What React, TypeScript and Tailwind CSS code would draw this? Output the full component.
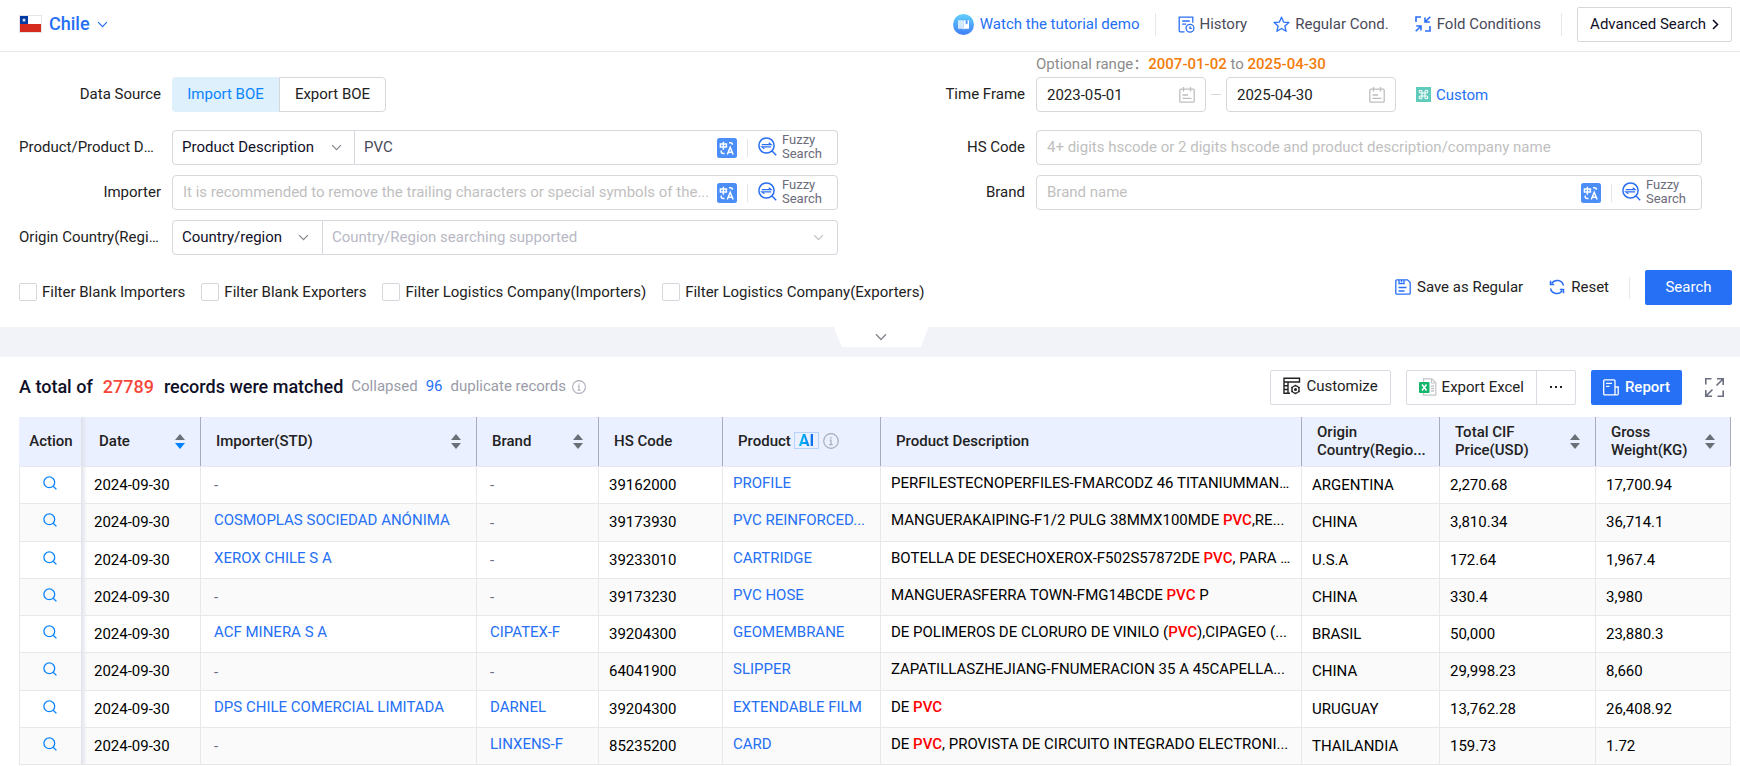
import type { ReactNode } from "react";

interface Row {
  importer?: string;
  brand?: string;
  hsCode: string;
  product: string;
  description: string;
  origin: string;
  price: string;
  weight: string;
}

const DATE = "2024-09-30";

const rows: Row[] = [
  { hsCode: "39162000", product: "PROFILE", description: "PERFILESTECNOPERFILES-FMARCODZ 46 TITANIUMMAN...", origin: "ARGENTINA", price: "2,270.68", weight: "17,700.94" },
  { importer: "COSMOPLAS SOCIEDAD ANÓNIMA", hsCode: "39173930", product: "PVC REINFORCED...", description: "MANGUERAKAIPING-F1/2 PULG 38MMX100MDE PVC,RE...", origin: "CHINA", price: "3,810.34", weight: "36,714.1" },
  { importer: "XEROX CHILE S A", hsCode: "39233010", product: "CARTRIDGE", description: "BOTELLA DE DESECHOXEROX-F502S57872DE PVC, PARA ...", origin: "U.S.A", price: "172.64", weight: "1,967.4" },
  { hsCode: "39173230", product: "PVC HOSE", description: "MANGUERASFERRA TOWN-FMG14BCDE PVC P", origin: "CHINA", price: "330.4", weight: "3,980" },
  { importer: "ACF MINERA S A", brand: "CIPATEX-F", hsCode: "39204300", product: "GEOMEMBRANE", description: "DE POLIMEROS DE CLORURO DE VINILO (PVC),CIPAGEO (...", origin: "BRASIL", price: "50,000", weight: "23,880.3" },
  { hsCode: "64041900", product: "SLIPPER", description: "ZAPATILLASZHEJIANG-FNUMERACION 35 A 45CAPELLA...", origin: "CHINA", price: "29,998.23", weight: "8,660" },
  { importer: "DPS CHILE COMERCIAL LIMITADA", brand: "DARNEL", hsCode: "39204300", product: "EXTENDABLE FILM", description: "DE PVC", origin: "URUGUAY", price: "13,762.28", weight: "26,408.92" },
  { brand: "LINXENS-F", hsCode: "85235200", product: "CARD", description: "DE PVC, PROVISTA DE CIRCUITO INTEGRADO ELECTRONI...", origin: "THAILANDIA", price: "159.73", weight: "1.72" },
];

/* ---------- icons ---------- */

function Chevron({ className }: { className?: string }) {
  return (
    <svg viewBox="0 0 12 8" fill="none" stroke="currentColor" strokeWidth="1.4" className={className} aria-hidden="true">
      <path d="M1 1.2 6 6.4l5-5.2" />
    </svg>
  );
}

function ChevronRight() {
  return (
    <svg viewBox="0 0 7 11" fill="none" stroke="currentColor" strokeWidth="1.6" className="h-[11px] w-[7px]" aria-hidden="true">
      <path d="m1 1 4.500 4.500L1 10" />
    </svg>
  );
}

function FlagIcon() {
  return (
    <svg viewBox="0 0 23 18" className="h-[18px] w-[23px]" aria-hidden="true">
      <rect x=".5" y=".5" width="22" height="17" fill="#fff" stroke="#e3e5ea" />
      <path fill="#d52b1e" d="M1 9h21v8H1z" />
      <path fill="#0039a6" d="M1 1h8v8H1z" />
      <path fill="#fff" d="m5 2.800.6 1.600h1.600L5.900 5.400l.5 1.600L5 6.100 3.600 7l.5-1.600-1.300-1h1.600z" />
    </svg>
  );
}

function TutorialIcon() {
  return (
    <svg viewBox="0 0 21 21" className="size-[21px]" aria-hidden="true">
      <defs>
        <linearGradient id="tutorial" x1="0" y1="0" x2="0" y2="1">
          <stop offset="0" stopColor="#62d0fb" />
          <stop offset="1" stopColor="#3f7df8" />
        </linearGradient>
      </defs>
      <circle cx="10.5" cy="10.5" r="10.5" fill="url(#tutorial)" />
      <path fill="#fff" fillOpacity=".75" d="M5 6.300h4.500q1 0 1 1v8.200q-.5-.8-1.500-.8H5z" />
      <path fill="#fff" d="M16 6.300h-4.500q-1 0-1 1v8.200q.5-.8 1.500-.8H16z" />
      <path fill="#4f9cf9" d="M12.600 6.300h2v4.200l-1-.9-1 .9z" />
    </svg>
  );
}

function HistoryIcon() {
  return (
    <svg viewBox="0 0 17 17" fill="none" stroke="#2a6ff5" strokeWidth="1.3" className="size-[17px]" aria-hidden="true">
      <path d="M6.500 15.800H2.200q-1 0-1-1V1.200h13.600v5.600M4.200 5h7.600M4.200 8.200h4" />
      <circle cx="12" cy="12.200" r="3.900" />
      <path d="M12 10.200v2.200h1.800" />
    </svg>
  );
}

function StarIcon() {
  return (
    <svg viewBox="0 0 17 17" fill="none" stroke="#2a6ff5" strokeWidth="1.3" strokeLinejoin="round" className="size-[17px]" aria-hidden="true">
      <path d="m8.500 1.200 2.100 4.900 5.300.4-4 3.500 1.200 5.300-4.600-2.800-4.600 2.800 1.200-5.300-4-3.500 5.300-.4z" />
    </svg>
  );
}

function FoldIcon() {
  return (
    <svg viewBox="0 0 16 16" fill="none" stroke="#2a6ff5" strokeWidth="1.6" className="size-4" aria-hidden="true">
      <path d="M1 6V1h5M15 10v5h-5M15.300.7 10.500 5.500M10 1.500V6h4.800M.7 15.300l4.800-4.800M6 14.500V10H1.200" />
    </svg>
  );
}

function CalendarIcon() {
  return (
    <svg viewBox="0 0 16 16" fill="none" stroke="#bfbfbf" strokeWidth="1.3" className="size-4" aria-hidden="true">
      <rect x=".8" y="2.200" width="14.400" height="13" rx="1" />
      <path d="M4.500 0v4.500M11.500 0v4.500M3.500 8H9M3.500 11.300h9" />
    </svg>
  );
}

function CustomIcon() {
  return (
    <svg viewBox="0 0 15 15" className="size-[15px]" aria-hidden="true">
      <path fill="#5ecbbb" d="M0 0h15v15H0z" />
      <path fill="none" stroke="#fff" strokeWidth="1.1" d="M6 6v3h3V6zM6 6H4.600A1.400 1.400 0 1 1 6 4.600zM9 6V4.600A1.400 1.400 0 1 1 10.400 6zM9 9h1.400A1.400 1.400 0 1 1 9 10.400zM6 9v1.400A1.400 1.400 0 1 1 4.600 9z" />
    </svg>
  );
}

function TranslateIcon() {
  return (
    <svg viewBox="0 0 20 20" fill="none" stroke="#fff" strokeWidth="1.5" className="size-5 shrink-0" aria-hidden="true">
      <rect width="20" height="20" rx="2.500" fill="#4b8ef9" stroke="none" />
      <path d="M3.400 5.900h6v3.200h-6zM6.400 3.800v8M12 4.800h1.600q1.800 0 1.800 1.900M4.200 12.500v1q0 2 2.100 2h1.300" />
      <path d="m10.300 16.500 2.900-7.300 2.900 7.300M11.300 14.200h3.800" />
    </svg>
  );
}

function FuzzyIcon() {
  return (
    <svg viewBox="0 0 19 19" fill="none" stroke="#2a6ff5" strokeWidth="1.5" className="size-[19px] shrink-0" aria-hidden="true">
      <circle cx="8.500" cy="8.500" r="7.600" />
      <path d="m13.800 13.800 4.400 4.400" />
      <path strokeWidth="1.2" d="M3.800 7.700h9.400L10.700 5.700M13.200 9.900H3.800l2.500 2" />
    </svg>
  );
}

function SaveIcon() {
  return (
    <svg viewBox="0 0 16 16" fill="none" stroke="#2a6ff5" strokeWidth="1.3" className="size-4" aria-hidden="true">
      <path d="M1.700.8h10.800l2.700 2.700v10.800q0 .9-.9.900H1.700q-.9 0-.9-.9V1.700q0-.9.9-.9z" />
      <path d="M4 1v3.500h5V1M6.500 1v2M3.500 8.500h8M3.500 12h6" />
    </svg>
  );
}

function ResetIcon() {
  return (
    <svg viewBox="0 0 16 16" fill="none" stroke="#2a6ff5" strokeWidth="1.5" className="size-4" aria-hidden="true">
      <path d="M14.500 6.500A6.500 6.500 0 0 0 2.800 4.300M1.500 9.500a6.500 6.500 0 0 0 11.700 2.200M1.500 1.800v3.700h3.700M14.500 14.200v-3.700h-3.700" />
    </svg>
  );
}

function CustomizeIcon() {
  return (
    <svg viewBox="0 0 18 18" fill="none" stroke="#222" strokeWidth="1.4" className="size-[18px]" aria-hidden="true">
      <path d="M7 16.300H1V1.200h15.500v4.500M1 5h15.500M5 5v11.300M1 8.700h4M1 12.500h4" />
      <circle cx="12.500" cy="12.500" r="3.600" />
      <circle cx="12.500" cy="12.500" r=".8" />
      <path d="M12.500 7.700v1.300M12.500 16v1.300M8.300 10.100l1.200.7M15.500 14.200l1.200.7M8.300 14.900l1.200-.7M15.500 10.800l1.200-.7" />
    </svg>
  );
}

function ExcelIcon() {
  return (
    <svg viewBox="0 0 18 18" fill="none" className="size-[18px]" aria-hidden="true">
      <path stroke="#c4c6ca" strokeWidth="1.2" d="M4.500 4V.8h8.300l4 4v12.400H4.500V15M12.500 1v4h4" />
      <path stroke="#c4c6ca" strokeWidth="1.3" d="M12 8h3M12 10.500h3M12 13h3" />
      <rect y="4" width="10.500" height="11" rx="1" fill="#12b76a" />
      <path stroke="#fff" strokeWidth="1.5" d="m3 6.500 4.500 6M7.500 6.500l-4.500 6" />
    </svg>
  );
}

function ReportIcon() {
  return (
    <svg viewBox="0 0 16 17" fill="none" stroke="#fff" strokeWidth="1.3" className="h-[17px] w-4" aria-hidden="true">
      <path d="M12 15.800V1.700q0-.9-.9-.9H1.600q-.9 0-.9.900v13.200q0 .9.9.9h12.800q.8 0 .8-.8V8H12M3 4.300h6M3 7.300h3.500" />
    </svg>
  );
}

function ExpandIcon() {
  return (
    <svg viewBox="0 0 19 19" fill="none" stroke="#6b6f80" strokeWidth="1.6" className="size-[19px]" aria-hidden="true">
      <path d="M.8 6.500V.8h5.700M18.200 12.500v5.700h-5.700M12 .8h6.200V7M18 1l-6.500 6.500M7 18.200H.8V12M1 18l6.500-6.500" />
    </svg>
  );
}

function InfoIcon({ className }: { className?: string }) {
  return (
    <svg viewBox="0 0 16 16" fill="none" stroke="#a9acb8" strokeWidth="1.2" className={className} aria-hidden="true">
      <circle cx="8" cy="8" r="7.300" />
      <path d="M8 4v1.500M6.500 7H8v4.500M6.300 11.700h3.400" />
    </svg>
  );
}

function SortIcon({ active }: { active?: boolean }) {
  return (
    <svg viewBox="0 0 10 15" className="h-[15px] w-[10px] shrink-0" aria-hidden="true">
      <path fill="#6b6f78" d="M5 0l5 6H0z" />
      <path fill={active ? "#0080ff" : "#6b6f78"} d="M0 9h10l-5 6z" />
    </svg>
  );
}

function SearchIcon() {
  return (
    <svg viewBox="0 0 14 14" fill="none" stroke="#0a84ff" strokeWidth="1.3" className="size-[14px]" aria-hidden="true">
      <circle cx="6.300" cy="6.300" r="5.400" />
      <path d="m10.200 10.200 3.200 3.200" />
    </svg>
  );
}

/* ---------- form parts ---------- */

interface FieldProps {
  id?: string;
  label: string;
  children: ReactNode;
}

function Field({ id, label, children }: FieldProps) {
  return (
    <div className="flex items-center gap-[11px] pr-[26px]">
      <label htmlFor={id} className="w-[142px] shrink-0 truncate pb-0.5 text-right">
        {label}
      </label>
      <div className="flex min-w-0 flex-1 items-center">{children}</div>
    </div>
  );
}

function FuzzySearch() {
  return (
    <>
      <button type="button" aria-label="Translate"><TranslateIcon /></button>
      <span className="mx-[10px] h-[18px] w-px bg-[#e4e6eb]" />
      <button type="button" className="flex items-center gap-[5px] pb-0.5 text-left text-[13px] leading-[14px] text-[#6b6b7b]">
        <FuzzyIcon />
        <span className="w-[42px]">Fuzzy Search</span>
      </button>
    </>
  );
}

function DateBox({ id, label, value }: { id: string; label?: string; value: string }) {
  return (
    <div className="flex h-[35px] w-[170px] items-center rounded border border-[#d5d7dc] pr-[10px] pl-[10px]">
      <input id={id} aria-label={label} defaultValue={value} className="w-full min-w-0 flex-1 outline-none" />
      <CalendarIcon />
    </div>
  );
}

function Check({ label }: { label: string }) {
  return (
    <label className="flex items-center gap-[5px]">
      <input type="checkbox" className="size-[18px] appearance-none rounded-xs border border-[#d5d7dc]" />
      {label}
    </label>
  );
}

/* ---------- table parts ---------- */

function HeadCell({ children, sort, active, className }: { children: ReactNode; sort?: boolean; active?: boolean; className?: string }) {
  return (
    <th className={`relative border-r border-[#a9acbd] text-left font-medium ${className ?? "pl-[15px]"}`}>
      <div className="flex items-center justify-between pr-[15px]">
        <div className="min-w-0 pb-0.5">{children}</div>
        {sort && <SortIcon active={active} />}
      </div>
    </th>
  );
}

function ColumnShadow() {
  return <span className="absolute inset-y-0 left-0 w-[6px] bg-linear-to-r from-[#dfe1ea] to-transparent" />;
}

function LinkCell({ value }: { value?: string }) {
  return (
    <td className="truncate border-r border-[#e8e8ec] px-[13px]">
      {value ? (
        <a href="#" className="block truncate pb-[5px] text-[#2570f5]">{value}</a>
      ) : (
        <span className="text-[#6b6b80]">-</span>
      )}
    </td>
  );
}

function PlainCell({ value }: { value: string }) {
  return <td className="truncate border-r border-[#e8e8ec] pb-px pl-[10px] text-black">{value}</td>;
}

export default function App() {
  return (
    <div className="min-h-screen bg-white font-['Roboto','Noto_Sans_CJK_SC',sans-serif] text-[15px] leading-[18px] text-[#222]">
      {/* Top bar */}
      <header className="flex h-[52px] items-center justify-between border-b border-[#e6e8ec] pr-2 pb-[3px] pl-[19px]">
        <button type="button" className="flex items-center gap-[7px] text-lg leading-6 font-medium text-[#2570f5]">
          <FlagIcon />
          Chile
          <Chevron className="h-[7px] w-[11px]" />
        </button>
        <div className="flex items-center text-[#4a4a5a]">
          <a href="#" className="flex items-center gap-[6px] text-[#2570f5]">
            <TutorialIcon />
            Watch the tutorial demo
          </a>
          <span className="mr-[22px] ml-4 h-[23px] w-px bg-[#e6e8ec]" />
          <button type="button" className="flex items-center gap-1"><HistoryIcon />History</button>
          <button type="button" className="ml-[26px] flex items-center gap-[5px]"><StarIcon />Regular Cond.</button>
          <button type="button" className="ml-[26px] flex items-center gap-[6px]"><FoldIcon />Fold Conditions</button>
          <span className="mr-[15px] ml-5 h-[23px] w-px bg-[#e6e8ec]" />
          <button type="button" className="flex h-[35px] items-center gap-[6px] rounded-xs border border-[#d5d7dc] px-3 text-[#101028]">
            Advanced Search
            <ChevronRight />
          </button>
        </div>
      </header>

      {/* Search conditions */}
      <form className="pb-[22px]" onSubmit={(e) => e.preventDefault()}>
        <div className="grid grid-cols-2 gap-y-[10px] pr-3 *:pl-[19px]">
          <div className="mb-2 pt-[25px]">
            <Field label="Data Source">
              <button type="button" className="h-[35px] w-[107px] rounded-l bg-[#def0fb] pb-0.5 text-[#0a84ff]">Import BOE</button>
              <button type="button" className="h-[35px] w-[107px] rounded-r border border-[#d5d7dc] pb-0.5">Export BOE</button>
            </Field>
          </div>
          <div className="mb-2">
            <p className="h-[25px] pt-[3px] pl-[153px] text-[#8c8c8c]">
              Optional range：
              <span className="font-medium text-[#f27c0a]">2007-01-02</span> to <span className="font-medium text-[#f27c0a]">2025-04-30</span>
            </p>
            <Field id="date-from" label="Time Frame">
              <DateBox id="date-from" value="2023-05-01" />
              <span className="mx-[5px] h-px w-[10px] bg-[#d5d7dc]" />
              <DateBox id="date-to" label="Time Frame end" value="2025-04-30" />
              <a href="#" className="ml-5 flex items-center gap-[5px] text-[#2570f5]"><CustomIcon />Custom</a>
            </Field>
          </div>

          <Field id="product" label="Product/Product Description">
            <div className="relative h-[35px] w-[183px] shrink-0">
              <select aria-label="Product field" className="h-full w-full appearance-none rounded-l border border-[#d5d7dc] px-[9px] pb-0.5 text-[#101028] outline-none">
                <option>Product Description</option>
              </select>
              <Chevron className="pointer-events-none absolute top-[14px] right-[13px] h-[7px] w-[11px] text-[#85858f]" />
            </div>
            <div className="flex h-[35px] flex-1 items-center rounded-r border border-l-0 border-[#d5d7dc] pr-[13px] pl-[9px]">
              <input id="product" defaultValue="PVC" className="min-w-0 flex-1 pb-0.5 text-[#4a4a5a] outline-none" />
              <FuzzySearch />
            </div>
          </Field>
          <Field id="hs-code" label="HS Code">
            <input id="hs-code" placeholder="4+ digits hscode or 2 digits hscode and product description/company name" className="h-[35px] flex-1 rounded border border-[#d5d7dc] px-[10px] pb-0.5 outline-none placeholder:text-[#bfbfbf]" />
          </Field>

          <Field id="importer" label="Importer">
            <div className="flex h-[35px] flex-1 items-center rounded border border-[#d5d7dc] pr-[13px] pl-[10px]">
              <input id="importer" placeholder="It is recommended to remove the trailing characters or special symbols of the..." className="min-w-0 flex-1 pb-0.5 text-ellipsis outline-none placeholder:text-[#bfbfbf]" />
              <FuzzySearch />
            </div>
          </Field>
          <Field id="brand" label="Brand">
            <div className="flex h-[35px] flex-1 items-center rounded border border-[#d5d7dc] pr-[13px] pl-[10px]">
              <input id="brand" placeholder="Brand name" className="min-w-0 flex-1 pb-0.5 outline-none placeholder:text-[#bfbfbf]" />
              <FuzzySearch />
            </div>
          </Field>

          <Field id="origin" label="Origin Country(Region)">
            <div className="relative h-[35px] w-[151px] shrink-0">
              <select aria-label="Origin field" className="h-full w-full appearance-none rounded-l border border-[#d5d7dc] px-[9px] pb-0.5 text-[#101028] outline-none">
                <option>Country/region</option>
              </select>
              <Chevron className="pointer-events-none absolute top-[14px] right-[14px] h-[7px] w-[11px] text-[#85858f]" />
            </div>
            <div className="flex h-[35px] flex-1 items-center rounded-r border border-l-0 border-[#d5d7dc] pr-[13px] pl-[9px]">
              <input id="origin" placeholder="Country/Region searching supported" className="min-w-0 flex-1 pb-0.5 outline-none placeholder:text-[#b8b9c4]" />
              <Chevron className="h-[7px] w-[11px] text-[#bfbfbf]" />
            </div>
          </Field>
        </div>

        <div className="mt-[15px] flex items-center justify-between pr-2 pl-[19px]">
          <div className="flex items-center gap-4 pt-[9px]">
            <Check label="Filter Blank Importers" />
            <Check label="Filter Blank Exporters" />
            <Check label="Filter Logistics Company(Importers)" />
            <Check label="Filter Logistics Company(Exporters)" />
          </div>
          <div className="flex items-center">
            <button type="button" className="flex items-center gap-[6px] pb-0.5"><SaveIcon />Save as Regular</button>
            <button type="reset" className="ml-[26px] flex items-center gap-[6px] pb-0.5"><ResetIcon />Reset</button>
            <span className="mr-[15px] ml-5 h-[22px] w-px bg-[#e6e8ec]" />
            <button type="submit" className="h-[35px] w-[87px] rounded-xs bg-[#2570f5] pb-0.5 text-white">Search</button>
          </div>
        </div>
      </form>

      {/* Collapse handle */}
      <div className="flex h-[30px] justify-center bg-[#f2f3f9] pl-[22px]">
        <button type="button" aria-label="Toggle conditions" className="flex h-5 w-[95px] items-center justify-center bg-white text-[#85858f] [clip-path:polygon(0_0,100%_0,92%_100%,9%_100%)]">
          <Chevron className="h-2 w-3" />
        </button>
      </div>

      {/* Results */}
      <section className="pr-[9px] pl-[19px]">
        <div className="flex h-[60px] items-center justify-between">
          <div className="flex items-center text-lg font-medium text-[#101028]">
            <h2>A total of</h2>
            <span className="mx-[10px] text-[#f5483b]">27789</span>
            <span>records were matched</span>
            <p className="ml-2 flex items-center text-[15px] font-normal text-[#9a9ba8]">
              Collapsed <span className="mx-2 text-[#2570f5]">96</span> duplicate records
              <InfoIcon className="ml-[6px] size-[14px]" />
            </p>
          </div>
          <div className="flex items-center">
            <button type="button" className="flex h-[35px] items-center gap-[5px] rounded-xs border border-[#d9dae2] px-3 pb-0.5"><CustomizeIcon />Customize</button>
            <div className="ml-[15px] flex h-[35px] rounded-xs border border-[#d9dae2]">
              <button type="button" className="flex items-center gap-[5px] border-r border-[#d9dae2] px-3"><ExcelIcon />Export Excel</button>
              <button type="button" aria-label="More" className="flex w-[38px] items-center justify-center gap-[3px]">
                <i className="size-[2px] bg-[#222]" />
                <i className="size-[2px] bg-[#222]" />
                <i className="size-[2px] bg-[#222]" />
              </button>
            </div>
            <button type="button" className="ml-[15px] flex h-[35px] items-center gap-[6px] rounded-xs bg-[#2570f5] px-3 font-medium text-white"><ReportIcon />Report</button>
            <button type="button" aria-label="Full screen" className="mr-[7px] ml-[23px]"><ExpandIcon /></button>
          </div>
        </div>

        <table className="w-full table-fixed border-separate border-spacing-0">
          <colgroup>
            <col className="w-[62px]" />
            <col className="w-[120px]" />
            <col className="w-[276px]" />
            <col className="w-[122px]" />
            <col className="w-[124px]" />
            <col className="w-[158px]" />
            <col />
            <col className="w-[138px]" />
            <col className="w-[156px]" />
            <col className="w-[135px]" />
          </colgroup>
          <thead>
            <tr className="h-[49px] bg-[#eaf0ff]">
              <th className="pb-0.5 pl-0.5 font-medium">Action</th>
              <HeadCell sort active className="pl-[18px]"><ColumnShadow />Date</HeadCell>
              <HeadCell sort>Importer(STD)</HeadCell>
              <HeadCell sort>Brand</HeadCell>
              <HeadCell>HS Code</HeadCell>
              <HeadCell>
                <span className="flex items-center">
                  Product
                  <span className="mr-1 ml-[3px] border border-[#b5d3fb] px-1 text-base leading-[15px] font-bold">
                    <span className="bg-linear-to-r from-[#12bff0] to-[#1663f0] bg-clip-text text-transparent">AI</span>
                  </span>
                  <InfoIcon className="size-4" />
                </span>
              </HeadCell>
              <HeadCell>Product Description</HeadCell>
              <HeadCell>Origin<br />Country(Regio...</HeadCell>
              <HeadCell sort>Total CIF<br />Price(USD)</HeadCell>
              <HeadCell sort>Gross<br />Weight(KG)</HeadCell>
            </tr>
          </thead>
          <tbody className="[&_td]:border-t [&_tr:last-child_td]:border-b">
            {rows.map((row, i) => (
              <tr key={i} className="h-[37px] even:bg-[#fafafa] nth-[4n+2]:h-[38px] last:h-[38px]">
                <td className="border-l border-[#e8e8ec] text-center">
                  <button type="button" aria-label="View record" className="block w-full pb-[5px] pl-[23px]"><SearchIcon /></button>
                </td>
                <td className="relative border-r border-[#e8e8ec] pb-px pl-[13px] text-black">
                  <ColumnShadow />
                  {DATE}
                </td>
                <LinkCell value={row.importer} />
                <LinkCell value={row.brand} />
                <PlainCell value={row.hsCode} />
                <td className="border-r border-[#e8e8ec] px-[10px]">
                  <a href="#" className="block truncate pb-[5px] text-[#2570f5]">{row.product}</a>
                </td>
                <td className="border-r border-[#e8e8ec] px-[10px]">
                  <p className="truncate pb-[5px] text-black">
                    {row.description.split(/(PVC)/).map((part, k) =>
                      part === "PVC" ? <em key={k} className="font-medium text-[#f00] not-italic">{part}</em> : part
                    )}
                  </p>
                </td>
                <PlainCell value={row.origin} />
                <PlainCell value={row.price} />
                <PlainCell value={row.weight} />
              </tr>
            ))}
          </tbody>
        </table>
      </section>
    </div>
  );
}
